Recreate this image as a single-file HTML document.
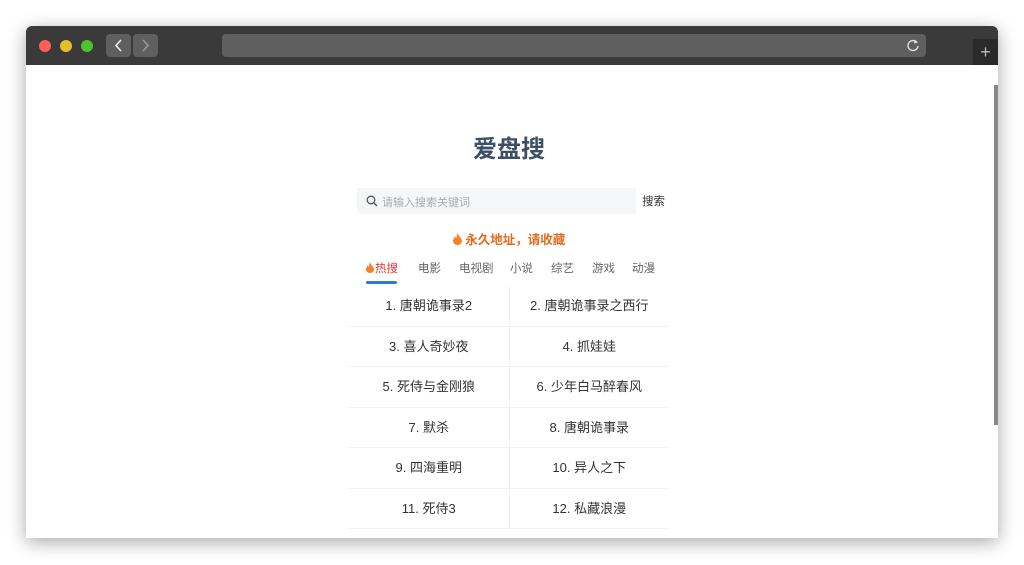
<!DOCTYPE html><html><head><meta charset="utf-8"><style>
body{margin:0;width:1024px;height:565px;background:#fff;font-family:"Liberation Sans","Noto Sans CJK SC",sans-serif;position:relative;overflow:hidden}
.win{position:absolute;left:26px;top:26px;width:972px;height:512px;border-radius:6px 6px 0 0;box-shadow:0 4px 18px rgba(0,0,0,.35);overflow:hidden;background:#fff}
.bar{height:39px;background:#3a3a3a;position:relative}
.d{position:absolute;top:14px;width:12px;height:12px;border-radius:50%}
.btn{position:absolute;top:8px;width:25px;height:23px;background:#5f5f5f;border-radius:4px}
.url{position:absolute;left:196px;top:8px;width:704px;height:23px;background:#5f5f5f;border-radius:4px}
.plus{position:absolute;left:947px;top:13px;width:25px;height:26px;background:#2a2a2a;color:#bbb;font-size:18px;text-align:center;line-height:26px}
.c{position:absolute;left:0;top:39px;width:972px;height:473px}
.abs{position:absolute}
.grid{position:absolute;left:323px;top:221px;width:320px}
.row{display:flex;height:40.5px;border-bottom:1px solid #f2f2f2;box-sizing:border-box}
.row div{flex:1;text-align:center;line-height:40px;font-size:13px;color:#333}
.row div:first-child{border-right:1px solid #f2f2f2}
.tab{position:absolute;top:195px;font-size:11.5px;color:#666}
</style></head><body><div class="win">
<div class="bar">
<div class="d" style="left:13px;background:#fe5f57"></div><div class="d" style="left:34px;background:#e9be2c"></div><div class="d" style="left:55px;background:#4fc232"></div>
<div class="btn" style="left:80px"><svg width="25" height="23"><path d="M15 6L10 11.5L15 17" stroke="#eee" stroke-width="1.6" fill="none"/></svg></div>
<div class="btn" style="left:107px"><svg width="25" height="23"><path d="M10 6L15 11.5L10 17" stroke="#999" stroke-width="1.6" fill="none"/></svg></div>
<div class="url"><svg style="position:absolute;right:6px;top:4px" width="14" height="14"><path d="M11 4.5A5 5 0 1 0 12 8" stroke="#ddd" stroke-width="1.4" fill="none"/><path d="M8.5 1.5L12 4.5L8 5.5Z" fill="#ddd"/></svg></div>
<div class="plus">+</div>
</div>
<div class="c">
<div style="position:absolute;right:0;top:20px;width:4px;height:340px;background:#888"></div>
<div class="abs" style="left:0;width:966px;top:64px;text-align:center;font-size:24px;font-weight:bold;color:#3d4f66">爱盘搜</div>
<div class="abs" style="left:331px;top:123px;width:279px;height:26px;background:#f5f6f7;border-radius:2px"><svg style="position:absolute;left:9px;top:7px" width="12" height="12"><circle cx="5" cy="5" r="3.8" stroke="#555" stroke-width="1.3" fill="none"/><path d="M8 8L11 11" stroke="#555" stroke-width="1.4"/></svg><span style="position:absolute;left:25px;top:6px;font-size:11px;color:#aaa">请输入搜索关键词</span></div>
<div class="abs" style="left:616px;top:128px;font-size:11.5px;color:#333">搜索</div>
<div class="abs" style="left:0;width:966px;top:164px;text-align:center;font-size:12.5px;font-weight:bold;color:#e4691c"><svg width="9" height="12" style="vertical-align:-1px"><path d="M4.5 0C5 3 9 5 9 8A4.5 4 0 0 1 0 8C0 6 1.5 5 2 3C2.5 5 3.5 5 3.5 5C3.5 3 4 1.5 4.5 0Z" fill="#f5822a"/></svg> 永久地址，请收藏</div>
<div class="tab" style="left:340px;color:#e33"><svg width="8" height="11" style="vertical-align:-1px;margin-right:1px"><path d="M4 0C4.5 3 8 4.5 8 7.5A4 3.5 0 0 1 0 7.5C0 5.5 1.3 4.5 1.8 3C2.2 4.5 3 4.6 3 4.6C3 3 3.5 1.3 4 0Z" fill="#f5822a"/></svg>热搜</div>
<div class="abs" style="left:340px;top:216px;width:31px;height:3px;background:#2a7bd4;border-radius:2px"></div>
<div class="tab" style="left:392px">电影</div><div class="tab" style="left:433px">电视剧</div><div class="tab" style="left:484px">小说</div><div class="tab" style="left:525px">综艺</div><div class="tab" style="left:566px">游戏</div><div class="tab" style="left:606px">动漫</div>
<div class="grid">
<div class="row"><div>1. 唐朝诡事录2</div><div>2. 唐朝诡事录之西行</div></div>
<div class="row"><div>3. 喜人奇妙夜</div><div>4. 抓娃娃</div></div>
<div class="row"><div>5. 死侍与金刚狼</div><div>6. 少年白马醉春风</div></div>
<div class="row"><div>7. 默杀</div><div>8. 唐朝诡事录</div></div>
<div class="row"><div>9. 四海重明</div><div>10. 异人之下</div></div>
<div class="row"><div>11. 死侍3</div><div>12. 私藏浪漫</div></div>
</div>
</div></div></body></html>
